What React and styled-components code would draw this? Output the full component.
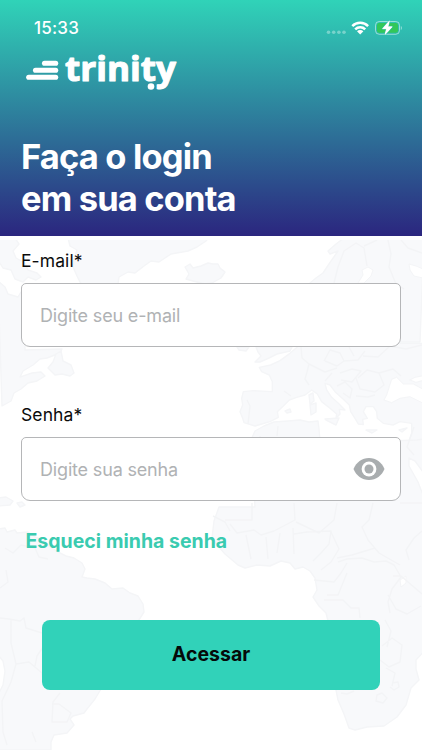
import { useState } from "react";
import styled, { createGlobalStyle } from "styled-components";

const GlobalStyle = createGlobalStyle`
  * {
    box-sizing: border-box;
  }

  body {
    margin: 0;
    background-color: #fff;
    font-family: Inter, "Liberation Sans", sans-serif;
  }
`;

const ScreenStyle = styled.div`
  position: relative;
  width: 100%;
  height: 750px;
  overflow: hidden;
`;

const HeaderStyle = styled.header`
  height: 236px;
  padding: 0 21px;
  background: linear-gradient(#30d3b8, #2b267f);
  color: #fff;
`;

const StatusBarStyle = styled.div`
  display: flex;
  justify-content: space-between;
  align-items: center;
  height: 56px;
  padding-left: 13px;

  & svg {
    margin-right: -1px;
  }
`;

const TimeStyle = styled.span`
  font-size: 17px;
  font-weight: 500;
  letter-spacing: 0.2px;
`;

const LogoStyle = styled.svg`
  display: block;
  margin: -18px 0 0 3px;
`;

const TitleStyle = styled.h1`
  margin: 38px 0 0;
  font-size: 34.5px;
  font-weight: 700;
  line-height: 42px;
  letter-spacing: -0.85px;
`;

const MapStyle = styled.svg`
  position: absolute;
  top: 240px;
  left: 0;
  z-index: -1;

  & .land {
    fill: #f8f9fb;
    stroke: #f4f5f7;
    stroke-width: 1.4;
  }
  & .water {
    fill: #fff;
    stroke: #f4f5f7;
    stroke-width: 1;
  }
  & .borders {
    fill: none;
    stroke: #f3f4f6;
    stroke-width: 1.4;
  }
  & path {
    vector-effect: non-scaling-stroke;
  }
`;

const FormStyle = styled.form`
  display: flex;
  flex-direction: column;
  padding: 13px 21px 0;
`;

const FieldStyle = styled.div`
  display: flex;
  flex-direction: column;
  margin-bottom: 56px;

  &.last {
    margin-bottom: 0;
  }
`;

const LabelStyle = styled.label`
  margin-bottom: 11px;
  font-size: 17.5px;
  line-height: 23px;
  letter-spacing: 0.1px;
  color: #0b0b0b;
`;

const InputBoxStyle = styled.div`
  display: flex;
  align-items: center;
  height: 64px;
  padding: 0 15px 0 18px;
  border: 1.5px solid #b5b6b8;
  border-radius: 5px 5px 9px 9px;
  background-color: #fff;
`;

const InputStyle = styled.input`
  flex: 1;
  min-width: 0;
  padding: 0;
  border: none;
  outline: none;
  background: transparent;
  font-family: inherit;
  font-size: 18px;
  letter-spacing: -0.17px;
  color: #0b0b0b;

  &::placeholder {
    color: #b0b2b4;
    opacity: 1;
  }
`;

const EyeButtonStyle = styled.button`
  display: flex;
  padding: 0;
  border: none;
  background: none;
`;

const ForgotStyle = styled.a`
  align-self: flex-start;
  margin: 27px 0 0 4.5px;
  font-size: 19.5px;
  font-weight: 700;
  line-height: 26px;
  color: #3acbb0;
  text-decoration: none;
`;

const SubmitStyle = styled.button`
  height: 70px;
  margin: 66px 21px 0;
  padding: 0 0 3px;
  border: none;
  border-radius: 8px;
  background-color: #31d2b9;
  font-family: inherit;
  font-size: 19.5px;
  font-weight: 700;
  color: #050a09;
`;

const StatusIcons = () => (
  <svg width="76" height="18" viewBox="326 19 76 18">
    <g fill="#fff" opacity="0.35">
      <circle cx="328.5" cy="32.3" r="1.8" />
      <circle cx="333.7" cy="32.3" r="1.8" />
      <circle cx="338.9" cy="32.3" r="1.8" />
      <circle cx="344" cy="32.3" r="1.8" />
    </g>
    <g fill="none" stroke="#fff" strokeWidth="2.5">
      <path d="M352.3 26.1a11.1 11.1 0 0 1 15.8 0" />
      <path d="M355.2 29.4a7 7 0 0 1 10 0" />
    </g>
    <path d="M357 31.3a4.6 4.6 0 0 1 6.4 0l-3.2 3.2z" fill="#fff" />
    <rect
      x="375.5"
      y="21.5"
      width="24"
      height="12.8"
      rx="3.8"
      fill="none"
      stroke="#fff"
      strokeOpacity="0.5"
    />
    <path d="M400.8 26v4c1.4-.6 1.4-3.4 0-4z" fill="#fff" opacity="0.5" />
    <rect x="377" y="23" width="21" height="9.8" rx="2.2" fill="#32c759" />
    <path
      d="M389.5 20.8l-7 7.9h4.1l-1.7 6 7.3-7.9h-4.3z"
      fill="#fff"
      stroke="#31bfae"
      strokeWidth="1.6"
      paintOrder="stroke"
      strokeLinejoin="round"
    />
    <path
      d="M389.5 20.8l-7 7.9h4.1l-1.7 6 7.3-7.9h-4.3z"
      fill="#fff"
      stroke="#fff"
      strokeWidth="0.5"
    />
  </svg>
);

const Logo = () => (
  <LogoStyle width="156" height="60" viewBox="24 38 156 60">
    <g stroke="#fff" strokeWidth="5.1" strokeLinecap="round">
      <path d="M44.5 63.2H55.7" />
      <path d="M35.5 70.2H55.7" />
      <path d="M28.7 77.2H55.7" />
    </g>
    <text
      x="65"
      y="81.3"
      textLength="111"
      lengthAdjust="spacingAndGlyphs"
      fill="#fff"
      stroke="#fff"
      strokeWidth="1.1"
      strokeLinejoin="round"
      fontFamily='"Open Sans", "Noto Sans", sans-serif'
      fontSize="34.5"
      fontWeight="700"
    >
      trinity
    </text>
    <circle cx="151" cy="86.5" r="3.3" fill="#fff" />
  </LogoStyle>
);

const WorldMap = () => (
  <MapStyle width="422" height="510" viewBox="0 240 422 510">
    <g className="land" strokeLinejoin="round">
      {/* north america and greenland */}
      <path d="M-2 238H15l4 6-6 7 3 7 9 5 3 7 9 3 4 4-5 3-8-3-5 5-8-3-4-9-8-2-5-8z" />
      <path d="M-2 281l7 6 3 7 10 3 3-5 4 3v55l37-1-2 4-13 5-7 1-7 6-10 6-3 6 12-4 9-1 4 4-8 5-9 2-7 6-7 4-3 8-9 5z" />
      <path d="M48 368l5-6 3-8 5-3 2 10 8 4 3 8-4 3-8-2-7 1z" />
      <path d="M68 238l2 8 7 4-3 9-1 8 4 9 4 8h37l1-7 9-5 7 1 9-7 7-5 8 1 12-8 17-3 9-4 9-6 4-5z" />
      <path d="M185 267l5-3 3 4 8-2 7-3 5 1 5 0 2 4 5 4-4 6-9 5-7 1-12-3-7-2 3-5z" />
      {/* europe and asia */}
      <path d="M424 238H344l-8 6-8 7 2 3 8-3-9 13-6 9-7 5-6 5 4 4v55h106z" />
      <path
        transform="translate(230 340) scale(0.3333)"
        d="M215 10L180 40 150 62 122 75 88 82 95 95 118 105 127 125V155L70 152 40 155 35 175 38 195 30 215 38 235 42 248 75 258 95 252 120 245 145 232 142 215 160 198 178 180 200 172 225 165 245 150 262 162 275 185 300 205 320 222 318 235 330 222 328 208 345 210 325 190 305 172 290 150 285 130 300 135 315 155 340 178 358 195 362 215 375 235 385 252 400 254 398 238 412 235 400 215 408 200 430 200 440 215 442 235 460 250 490 255 510 245 545 250 545 280 535 310 530 325H590V10z"
      />
      <path d="M256 347h36l-2 4-13 3-8 4-9 4-5 0 6-6-3-4z" />
      <path d="M237 347h12l-3 4-7-1z" />
      <path d="M309 395l4-2 1 8-4 3zM310 405l6-2 0 9-5 3zM325 419l14-1-3 7-10-5zM366 430l11 0-5 3zM285 411l5-2 1 3-4 1zM399 430l8-2-5 4z" />
      {/* africa */}
      <path d="M251 440l4-9 9-5 10-4 14-1 12-1 9 2 9-1 1 8 1 12h70l27-1 14-2v48l-8-14-8-11-6-3v8l9 16 5 13 6 7v144l-13 14v9l3 11-8 8-5 17-9 12-13 9-17 1-12 3-6-2-5-14-6-14-4-20-4-51-4-16-7-7-6-9 4-7-2-12-5-7-7-4-8 2-5-6-9-2-11 5-13-1-12 3-7-3-13-11-7-8-6-8 2-17 5-14h36z" />
      {/* south america and the caribbean */}
      <path d="M-2 529l7-1 2 4 8-2 2 3 11-1 7 5 10 4 4 5 9 6 8 4 8 2 8 5 3 6-3 8 5 1 8 1 10 4 7 6 11-1 7 5 8 3 5 8 1 8-7 11-7 10-10 45-19 11-6 10-8 10-3 4-11 3-3 3 4 6-7 8-13 2-3 7v8H-2v-55l5-10 2-14-2-10-5-6z" />
      <path d="M-2 498l8-1 7 4-3 4-12 1zM17 503l5-1 3 3-5 2z" />
    </g>
    <g className="water">
      <path d="M358 283l5-8-1-5 6-3 5 3-2 6-7 7z" />
      <path d="M409 264l7 2 7 3v9l-9-2-4-6z" />
      <path
        transform="translate(230 340) scale(0.3333)"
        d="M470 165L462 180 485 188 510 175 540 170 580 190V148L550 132 520 132 500 112 485 118 478 140zM540 120l15-8 25-5v14l-22 6z"
      />
      <path d="M400 580l6-4 0 7-5 4z" />
    </g>
    <g className="borders" strokeLinejoin="round">
      <path d="M334 283l4-16 6-16 12-8 8 5 3 18M364 246l13-6M388 240l3 14-2 13 7 17 8 5M401 240l7 8 14 5" />
      <path d="M301 347l1 11 7 6-2 8-2 7 4 6M325 361l12 5 7-5-4-8-10-3-6 11M309 364l16 8 12-4M344 361l14-1 7-9M340 373l12-4 9 2-9 11-11-2M358 378l9-8 12 3 5 12-9 7-15-3-4-11M363 356l15 1 12-11 16 3 16-4M379 373l14-4 8 7M337 386l8-4 7 7-2 9-7-5M284 391l7 5M247 400l3 6-2 18M356 396l12 1 7-2M332 373l-7 8M349 347l5 9" />
      <path d="M260 436v12M278 426l-1 10M414 427l-7 20 7 8M252 503v17h-27M213 516l12 6 5 9M294 503l1 17-21 11-13 4-7-5-17 3-7-9M337 503l-3 17-15 13-23-11M373 503l-4 17-7 7 6 13 11 13 21 12M400 503h22M422 531l-8 7-8 12 3 10M246 535l5 24M266 537l2 22M280 533l-3 20M293 528l1 26M294 534l13-2 24-1-2 13-8 9-8 8M331 532l8 17-8 13-10 8M337 558l15-3 23-7M338 562l9-3 15-1 12 4 12-1 8 4 7 12-9 12-4 13 2 11M314 580l20 2 7-9 6-10M324 600h19l8 8h8l1 10M347 573l-9 22-11 0M393 576l8 0 21 18M388 595l8 14 11 5 14-8M385 620l6 11-4 16M382 646l10-8 10 7-2 17-11 5-9-7M386 668l9 5-3 13M341 693l6 1 7-3M377 695l5-2 5 5-4 5-7-2zM392 683l6-1 1 5-5 3-4-3" />
      <path d="M6 570l2 12-8 6M0 618l9 1 11 2 4-3 2 10 16 5M11 620l0 23 5 21-5 18-9 19 1 31 4 13M16 664l13-2 13 11 1 8M43 647l-6 9-2 10M60 693l-7 9-1 20 15 0 4-9-12-9-7 0M36 742l-4-10M5 548l8 5 8-8 14 3 4 9 9 2" />
    </g>
  </MapStyle>
);

const Field = (props) => (
  <FieldStyle className={props.isLast ? "last" : ""}>
    <LabelStyle htmlFor={props.id}>{props.label}</LabelStyle>
    <InputBoxStyle>
      <InputStyle
        id={props.id}
        type={props.type}
        placeholder={props.placeholder}
      />
      {props.children}
    </InputBoxStyle>
  </FieldStyle>
);

const App = () => {
  const [isPasswordShown, setIsPasswordShown] = useState(false);

  const handleTogglePassword = () => {
    setIsPasswordShown(!isPasswordShown);
  };

  return (
    <ScreenStyle>
      <GlobalStyle />
      <WorldMap />
      <HeaderStyle>
        <StatusBarStyle>
          <TimeStyle>15:33</TimeStyle>
          <StatusIcons />
        </StatusBarStyle>
        <Logo />
        <TitleStyle>
          Faça o login
          <br />
          em sua conta
        </TitleStyle>
      </HeaderStyle>
      <FormStyle>
        <Field
          id="email"
          label="E-mail*"
          type="email"
          placeholder="Digite seu e-mail"
        />
        <Field
          id="password"
          label="Senha*"
          type={isPasswordShown ? "text" : "password"}
          placeholder="Digite sua senha"
          isLast
        >
          <EyeButtonStyle type="button" onClick={handleTogglePassword}>
            <svg width="32" height="24" viewBox="0 0 32 24">
              <path
                d="M16 1C9 1 3 5.5.5 12 3 18.5 9 23 16 23s13-4.5 15.5-11C29 5.5 23 1 16 1z"
                fill="#a9adaf"
              />
              <circle cx="16" cy="12" r="7.4" fill="#fff" />
              <circle cx="16" cy="12" r="4.5" fill="#a9adaf" />
            </svg>
          </EyeButtonStyle>
        </Field>
        <ForgotStyle href="#">Esqueci minha senha</ForgotStyle>
        <SubmitStyle type="button">Acessar</SubmitStyle>
      </FormStyle>
    </ScreenStyle>
  );
};

export default App;
